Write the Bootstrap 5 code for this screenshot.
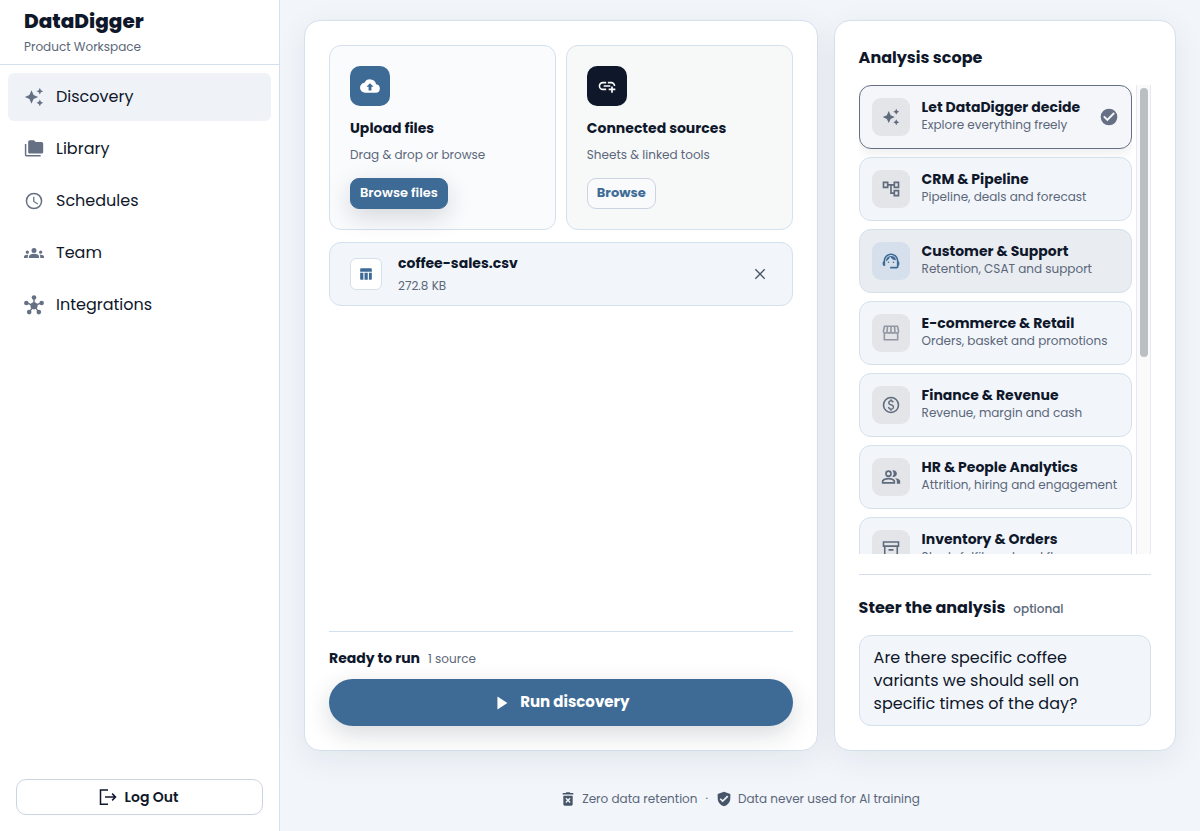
<!DOCTYPE html>
<html lang="en">
<head>
<meta charset="utf-8">
<meta name="viewport" content="width=device-width, initial-scale=1">
<title>DataDigger</title>
<link href="https://cdn.jsdelivr.net/npm/bootstrap@5.3.0/dist/css/bootstrap.min.css" rel="stylesheet">
<style>
  :root { --ink:#0f172a; --muted:#5b6779; --line:#d5e0ed; --blue:#3e6b96; --mist:#f2f6fb; }
  body { font-family: Poppins, Inter, sans-serif; color: var(--ink); background: var(--mist); font-size: 16px; }
  svg { fill: currentColor; flex: none; display: block; }
  .i14 { width: 14px; height: 14px; } .i16 { width: 16px; height: 16px; } .i18 { width: 18px; height: 18px; } .i20 { width: 20px; height: 20px; }
  .t-muted { color: var(--muted); }
  .t-12 { font-size: 12px; line-height: 18px; }
  .t-14 { font-size: 14px; line-height: 20px; font-weight: 700; }
  .t-head { font-size: 16px; line-height: 26px; font-weight: 700; }
  .rule { border-top: 1px solid var(--line); }

  .sidebar { background: #fff; border-right: 1px solid var(--line); }
  .brand { border-bottom: 1px solid var(--line); padding: 8px 24px 6px; }
  .brand-name { font-size: 20px; line-height: 26px; font-weight: 800; }
  .brand-sub { line-height: 24px; }
  .side-link { height: 48px; padding: 0 16px; gap: 12px; border-radius: 6px; color: var(--ink); text-decoration: none; }
  .side-link svg { color: #667085; }
  .side-link.active, .side-link:hover { background: #eff3f8; }
  .btn-logout { height: 36px; border: 1px solid #cbd5e1; border-radius: 10px; background: #fff; color: var(--ink); font-size: 14px; font-weight: 600; }

  .workspace { padding: 20px 24px 0; min-width: 0; }
  .panels { display: grid; gap: 16px; grid-template-columns: minmax(0, 1fr); }
  .panel { background: #fff; border: 1px solid var(--line); border-radius: 16px; padding: 24px; box-shadow: 0 8px 32px rgba(15,23,42,.07); }
  .tiles { display: grid; gap: 10px; grid-template-columns: repeat(auto-fit, minmax(200px, 1fr)); }
  .tile { border: 1px solid var(--line); border-radius: 12px; padding: 20px; background: #fafbfd; }
  .tile-alt { background: #f7f9f9; }
  .tile-text { margin-bottom: 14px; }
  .tile-icon { width: 40px; height: 40px; border-radius: 10px; background: var(--blue); color: #fff; }
  .tile-icon.dark { background: var(--ink); }
  .btn-pick { display: block; height: 31px; padding: 0 9px 2px; border: 1px solid #cbd5e1; border-radius: 9px; background: #f8fafc; color: var(--blue); font-size: 13px; line-height: 18px; font-weight: 700; }
  .btn-pick.solid { background: var(--blue); border-color: var(--blue); color: #fff; font-weight: 600; box-shadow: 0 8px 24px rgba(15,23,42,.16); }
  .file-row { min-height: 64px; margin-top: 12px; border: 1px solid var(--line); border-radius: 12px; background: var(--mist); padding: 0 20px; gap: 16px; }
  .file-icon { width: 32px; height: 32px; border: 1px solid var(--line); border-radius: 6px; background: #fff; color: var(--blue); }
  .btn-x { width: 24px; height: 24px; padding: 4px; border: 0; background: none; color: #475569; }
  .ready { padding: 16px 0 11px; }
  .btn-run { height: 47px; border: 0; border-radius: 24px; background: var(--blue); color: #fff; font-size: 15px; font-weight: 700; gap: 8px; box-shadow: 0 8px 24px rgba(15,23,42,.16); }

  .scope-head { margin-bottom: 14px; }
  .scope-wrap { min-height: 200px; gap: 4px; }
  .scope-list { overflow-y: auto; scrollbar-width: none; min-width: 0; }
  .scope-list::-webkit-scrollbar { display: none; }
  .scope-item { height: 64px; flex: none; border: 1px solid var(--line); border-radius: 12px; background: var(--mist); padding: 0 12px; gap: 12px; cursor: pointer; }
  .scope-text { padding-bottom: 2px; }
  .scope-name { font-size: 14px; line-height: 18px; font-weight: 700; }
  .scope-item:hover, .scope-item.hovered { background: #e9ecf1; }
  .scope-icon { width: 38px; height: 38px; flex: none; border-radius: 9px; background: #e4e5e9; color: #5f6b7c; }
  .hovered .scope-icon { background: #d6e0ec; color: var(--blue); }
  .scope-icon.dim { color: #9298a3; }
  .scope-tick { display: none; color: #667085; }
  .btn-check:checked + .scope-item { border-color: #667085; background: #f4f6f9; box-shadow: 0 4px 12px rgba(15,23,42,.08); }
  .btn-check:checked + .scope-item .scope-tick { display: block; margin-left: auto; }
  .rail { width: 15px; flex: none; border: solid #e6eaef; border-width: 0 1px; background: #fafafb; padding: 3px 2px 3px 3px; }
  .rail-thumb { width: 8px; height: 58%; border-radius: 4px; background: #bcbfc2; }
  .steer-block { margin-top: 20px; padding-top: 20px; }
  .steer { border: 1px solid var(--line); border-radius: 12px; background: var(--mist); color: var(--ink); padding: 10px 14px; font-size: 16px; line-height: 23px; resize: none; overflow: hidden; }
  .page-foot { min-height: 80px; padding-top: 16px; gap: 8px; }
  .page-foot svg { color: #475569; }
  .foot-note { gap: 6px; }

  @media (min-width: 992px) {
    .shell { height: 100vh; min-height: 700px; }
    .sidebar { width: 280px; flex: none; }
    .panels { grid-template-columns: minmax(0, 3fr) minmax(0, 2fr); }
    .scope-wrap { flex: 1 1 0; }
  }
  @media (max-width: 991px) { .scope-wrap { height: 420px; } }
</style>
</head>
<body>
<svg class="d-none" aria-hidden="true">
  <symbol id="spark" viewBox="0 0 24 24"><path d="M19 9l1.250-2.750L23 5l-2.750-1.250L19 1l-1.250 2.750L15 5l2.750 1.250zM11.500 9.500L9 4 6.500 9.500 1 12l5.500 2.500L9 20l2.500-5.500L17 12zM19 15l-1.250 2.750L15 19l2.750 1.250L19 23l1.250-2.750L23 19l-2.750-1.250z"/></symbol>
</svg>
<div class="shell d-flex flex-column flex-lg-row">
  <aside class="sidebar d-flex flex-column">
    <div class="brand">
      <div class="brand-name">DataDigger</div>
      <div class="brand-sub t-muted small-line" style=""><span class="t-12">Product Workspace</span></div>
    </div>
    <nav class="d-flex flex-column gap-1 p-2" aria-label="Main">
      <a class="side-link active d-flex align-items-center" href="#" aria-current="page"><svg class="i20"><use href="#spark"/></svg>Discovery</a>
      <a class="side-link d-flex align-items-center" href="#"><svg class="i20" viewBox="0 0 24 24"><path d="M2.800 6H1v13c0 1.100.9 2 2 2h17v-1.800H2.800zM21 3.500h-7l-2-2H7c-1.100 0-2 .9-2 2V15.500c0 1.100.9 2 2 2h14c1.100 0 2-.9 2-2v-10c0-1.100-.9-2-2-2z"/></svg>Library</a>
      <a class="side-link d-flex align-items-center" href="#"><svg class="i20" viewBox="0 0 24 24"><path d="M12 2a10 10 0 1 0 0 20 10 10 0 0 0 0-20zm0 18.200a8.200 8.200 0 1 1 0-16.400 8.200 8.200 0 0 1 0 16.400zM12.500 7H11v6l5.250 3.150.75-1.230-4.500-2.670z"/></svg>Schedules</a>
      <a class="side-link d-flex align-items-center" href="#"><svg class="i20" viewBox="0 0 24 24"><path d="M12 12.750c1.630 0 3.070.39 4.240.9 1.080.48 1.760 1.560 1.760 2.730V18H6v-1.610c0-1.180.68-2.260 1.760-2.730 1.170-.52 2.610-.91 4.240-.91zM4 13a2 2 0 1 0 0-4 2 2 0 0 0 0 4zm1.130 1.100C4.760 14.040 4.390 14 4 14c-.99 0-1.930.21-2.780.58C.48 14.900 0 15.620 0 16.430V18h4.500v-1.610c0-.83.23-1.610.63-2.290zM20 13a2 2 0 1 0 0-4 2 2 0 0 0 0 4zm4 3.430c0-.81-.48-1.530-1.220-1.850A6.950 6.950 0 0 0 20 14c-.39 0-.76.04-1.130.1.4.68.63 1.460.63 2.290V18H24zM12 6a3 3 0 1 1 0 6 3 3 0 0 1 0-6z"/></svg>Team</a>
      <a class="side-link d-flex align-items-center" href="#"><svg class="i20" viewBox="0 0 24 24"><path d="M12 3v10M2.800 9.300L12 13l9.200-3.700M6.500 20L12 13l5.500 7" fill="none" stroke="currentColor" stroke-width="1.700"/><circle cx="12" cy="13" r="4.300"/><circle cx="12" cy="3" r="2.800"/><circle cx="2.800" cy="9.500" r="2.700"/><circle cx="21.200" cy="9.500" r="2.700"/><circle cx="6.200" cy="20.500" r="2.800"/><circle cx="17.800" cy="20.500" r="2.800"/></svg>Integrations</a>
    </nav>
    <div class="mt-auto p-3">
      <button type="button" class="btn-logout w-100 d-flex align-items-center justify-content-center gap-2 pe-2"><svg class="i18" viewBox="0 0 24 24"><path d="M12 2.500H2v19h10M8 12h14M17.500 7.500L22 12l-4.500 4.500" fill="none" stroke="currentColor" stroke-width="2"/></svg>Log Out</button>
    </div>
  </aside>

  <main class="workspace flex-grow-1 d-flex flex-column">
    <div class="panels flex-grow-1">
      <section class="panel d-flex flex-column">
        <div class="tiles">
          <div class="tile">
            <div class="tile-icon d-flex align-items-center justify-content-center"><svg class="i20" viewBox="0 0 24 24"><path fill-rule="evenodd" d="M19.350 10.040A7.490 7.490 0 0 0 5.350 8.040 6 6 0 0 0 6 20h13a5 5 0 0 0 .35-9.960zM13.700 13v4.500h-3.400V13H7.700L12 8.700l4.300 4.300z"/></svg></div>
            <h2 class="t-14 mt-2 pt-1 mb-2">Upload files</h2>
            <p class="tile-text t-12 t-muted">Drag &amp; drop or browse</p>
            <button type="button" class="btn-pick solid">Browse files</button>
          </div>
          <div class="tile tile-alt">
            <div class="tile-icon dark d-flex align-items-center justify-content-center"><svg class="i20" viewBox="0 0 24 24"><path d="M8 11h8v2H8zM20.100 12H22c0-2.760-2.240-5-5-5h-4v1.900h4a3.100 3.100 0 0 1 3.100 3.100zM3.900 12A3.100 3.100 0 0 1 7 8.900h4V7H7a5 5 0 0 0 0 10h4v-1.900H7A3.100 3.100 0 0 1 3.900 12zM19 12.500h-2V15h-3v2h3v3h2v-3h3v-2h-3z"/></svg></div>
            <h2 class="t-14 mt-2 pt-1 mb-2">Connected sources</h2>
            <p class="tile-text t-12 t-muted">Sheets &amp; linked tools</p>
            <button type="button" class="btn-pick">Browse</button>
          </div>
        </div>
        <div class="file-row d-flex align-items-center">
          <div class="file-icon d-flex align-items-center justify-content-center"><svg class="i14" viewBox="0 0 24 24"><path d="M9.500 10h5.500v12H9.500zM17 22h3c1.100 0 2-.9 2-2V10h-5zM20 2H4c-1.100 0-2 .9-2 2v4h20V4c0-1.100-.9-2-2-2zM2 20c0 1.100.9 2 2 2h3.500V10H2z"/></svg></div>
          <div class="flex-grow-1">
            <div class="t-14">coffee-sales.csv</div>
            <div class="t-12 t-muted mt-1">272.8 KB</div>
          </div>
          <button type="button" class="btn-x" aria-label="Remove file"><svg class="i16" viewBox="0 0 24 24"><path d="M5 5l14 14M19 5L5 19" stroke="currentColor" stroke-width="2"/></svg></button>
        </div>
        <div class="ready rule mt-auto d-flex align-items-baseline gap-2">
          <span class="t-14">Ready to run</span><span class="t-12 t-muted">1 source</span>
        </div>
        <button type="button" class="btn-run d-flex align-items-center justify-content-center"><svg class="i20" viewBox="0 0 24 24"><path d="M6.500 4.200v15.600L18.500 12z"/></svg>Run discovery</button>
      </section>

      <section class="panel d-flex flex-column">
        <h2 class="scope-head t-head">Analysis scope</h2>
        <div class="scope-wrap d-flex">
          <div class="scope-list flex-grow-1 d-flex flex-column gap-2" role="radiogroup" aria-label="Analysis scope">
            <input class="btn-check" type="radio" name="scope" id="s1" checked>
            <label class="scope-item d-flex align-items-center" for="s1"><span class="scope-icon d-flex align-items-center justify-content-center"><svg class="i18"><use href="#spark"/></svg></span><span class="scope-text"><span class="scope-name d-block">Let DataDigger decide</span><span class="t-12 t-muted d-block">Explore everything freely</span></span><svg class="i20 scope-tick" viewBox="0 0 24 24"><path fill-rule="evenodd" d="M12 2a10 10 0 1 0 0 20 10 10 0 0 0 0-20zm-2 15l-5-5 1.600-1.600L10 13.800l7.400-7.400L19 8z"/></svg></label>
            <input class="btn-check" type="radio" name="scope" id="s2">
            <label class="scope-item d-flex align-items-center" for="s2"><span class="scope-icon d-flex align-items-center justify-content-center"><svg class="i20" viewBox="0 0 24 24"><path fill-rule="evenodd" d="M22 11V3h-7v3H9V3H2v8h7V8h2v10h4v3h7v-8h-7v3h-2V8h2v3zM7 9H4V5h3zm10 6h3v4h-3zm0-10h3v4h-3z"/></svg></span><span class="scope-text"><span class="scope-name d-block">CRM &amp; Pipeline</span><span class="t-12 t-muted d-block">Pipeline, deals and forecast</span></span></label>
            <input class="btn-check" type="radio" name="scope" id="s3">
            <label class="scope-item hovered d-flex align-items-center" for="s3"><span class="scope-icon d-flex align-items-center justify-content-center"><svg class="i20" viewBox="0 0 24 24"><path d="M21 12.220C21 6.730 16.740 3 12 3c-4.690 0-9 3.650-9 9.280-.6.34-1 .98-1 1.720v2c0 1.100.9 2 2 2h1v-6.100a7 7 0 0 1 14 0V19h-8v2h8c1.100 0 2-.9 2-2v-1.220c.59-.31 1-.92 1-1.640v-2.300c0-.7-.41-1.310-1-1.620zM18 11.030A6.040 6.040 0 0 0 12.050 6c-3.030 0-6.290 2.510-6.030 6.450a8.070 8.070 0 0 0 4.860-5.890A8 8 0 0 0 18 11.030z"/><circle cx="9" cy="13.500" r="1"/><circle cx="15" cy="13.500" r="1"/></svg></span><span class="scope-text"><span class="scope-name d-block">Customer &amp; Support</span><span class="t-12 t-muted d-block">Retention, CSAT and support</span></span></label>
            <input class="btn-check" type="radio" name="scope" id="s4">
            <label class="scope-item d-flex align-items-center" for="s4"><span class="scope-icon dim d-flex align-items-center justify-content-center"><svg class="i20" viewBox="0 0 24 24"><path d="M4.200 3.900h15.600L21 9.400c.3 1.500-.6 2.700-2 2.700s-2.300-.9-2.300-2.300c0 1.400-1 2.300-2.400 2.300S12 11.200 12 9.800c0 1.400-1 2.300-2.300 2.300S7.300 11.200 7.300 9.800c0 1.400-1 2.300-2.300 2.300s-2.300-1.200-2-2.700zM4 12.500V20h16v-7.500M7.300 9.800L7.800 4M12 9.800V4M16.700 9.800L16.200 4" fill="none" stroke="currentColor" stroke-width="1.900"/></svg></span><span class="scope-text"><span class="scope-name d-block">E-commerce &amp; Retail</span><span class="t-12 t-muted d-block">Orders, basket and promotions</span></span></label>
            <input class="btn-check" type="radio" name="scope" id="s5">
            <label class="scope-item d-flex align-items-center" for="s5"><span class="scope-icon d-flex align-items-center justify-content-center"><svg class="i20" viewBox="0 0 24 24"><circle cx="12" cy="12" r="9" fill="none" stroke="currentColor" stroke-width="1.900"/><path d="M12.890 11.100c-1.780-.59-2.640-.96-2.640-1.900 0-1.020 1.110-1.390 1.810-1.390 1.310 0 1.790.99 1.900 1.340l1.580-.67c-.15-.44-.82-1.910-2.660-2.230V5h-1.750v1.260c-2.600.56-2.620 2.850-2.620 2.960 0 2.270 2.250 2.910 3.350 3.310 1.580.56 2.280 1.070 2.280 2.030 0 1.130-1.050 1.610-1.980 1.610-1.820 0-2.340-1.870-2.400-2.090l-1.660.67c.63 2.190 2.280 2.780 2.900 2.960V19h1.750v-1.240c.52-.09 3.020-.59 3.020-3.220.01-1.390-.6-2.610-2.880-3.440z"/></svg></span><span class="scope-text"><span class="scope-name d-block">Finance &amp; Revenue</span><span class="t-12 t-muted d-block">Revenue, margin and cash</span></span></label>
            <input class="btn-check" type="radio" name="scope" id="s6">
            <label class="scope-item d-flex align-items-center" for="s6"><span class="scope-icon d-flex align-items-center justify-content-center"><svg class="i20" viewBox="0 0 24 24"><path fill-rule="evenodd" d="M16.670 13.130C18.040 14.060 19 15.320 19 17v3h4v-3c0-2.180-3.570-3.470-6.330-3.870zM15 12a4 4 0 1 0-1.330-7.760 6 6 0 0 1 0 7.520c.42.14.86.24 1.330.24zM9 12a4 4 0 1 0 0-8 4 4 0 0 0 0 8zm0-6a2 2 0 1 1 0 4 2 2 0 0 1 0-4zM9 13c-2.670 0-8 1.340-8 4v3h16v-3c0-2.660-5.330-4-8-4zm6 5H3v-.99C3.200 16.290 6.300 15 9 15s5.800 1.290 6 2z"/></svg></span><span class="scope-text"><span class="scope-name d-block">HR &amp; People Analytics</span><span class="t-12 t-muted d-block">Attrition, hiring and engagement</span></span></label>
            <input class="btn-check" type="radio" name="scope" id="s7">
            <label class="scope-item d-flex align-items-center" for="s7"><span class="scope-icon d-flex align-items-center justify-content-center"><svg class="i20" viewBox="0 0 24 24"><path d="M3 3.500h18v5H3zM4.500 8.500V21h15V8.500M9 13h6" fill="none" stroke="currentColor" stroke-width="1.900"/></svg></span><span class="scope-text"><span class="scope-name d-block">Inventory &amp; Orders</span><span class="t-12 t-muted d-block">Stock, fulfilment and flow</span></span></label>
          </div>
          <div class="rail" aria-hidden="true"><div class="rail-thumb"></div></div>
        </div>
        <div class="steer-block rule">
          <label class="scope-head d-flex align-items-baseline gap-2" for="steer"><span class="t-head">Steer the analysis</span><span class="t-12 t-muted fw-medium">optional</span></label>
          <textarea id="steer" class="steer w-100 d-block" rows="3">Are there specific coffee variants we should sell on specific times of the day?</textarea>
        </div>
      </section>
    </div>
    <footer class="page-foot t-12 t-muted d-flex flex-wrap align-items-center justify-content-center">
      <span class="foot-note d-flex align-items-center"><svg class="i16" viewBox="0 0 24 24"><path fill-rule="evenodd" d="M5 20c0 1.100.9 2 2 2h10c1.100 0 2-.9 2-2V7H5zM8.100 11.600l1.500-1.500 2.400 2.400 2.400-2.400 1.500 1.500-2.400 2.400 2.400 2.400-1.500 1.500-2.400-2.400-2.400 2.400-1.500-1.500 2.400-2.400zM15.500 3l-1-1h-5l-1 1H4v2.200h16V3z"/></svg>Zero data retention</span>
      <span>·</span>
      <span class="foot-note d-flex align-items-center"><svg class="i16" viewBox="0 0 24 24"><path fill-rule="evenodd" d="M12 1L2.500 4.500V11c0 5.550 4 10.740 9.500 12 5.500-1.260 9.500-6.450 9.500-12V4.500zM10 17l-4.500-4.500 1.800-1.800L10 13.400l6.700-6.700 1.800 1.800z"/></svg>Data never used for AI training</span>
    </footer>
  </main>
</div>
<script src="https://cdn.jsdelivr.net/npm/bootstrap@5.3.0/dist/js/bootstrap.bundle.min.js"></script>
</body>
</html>
